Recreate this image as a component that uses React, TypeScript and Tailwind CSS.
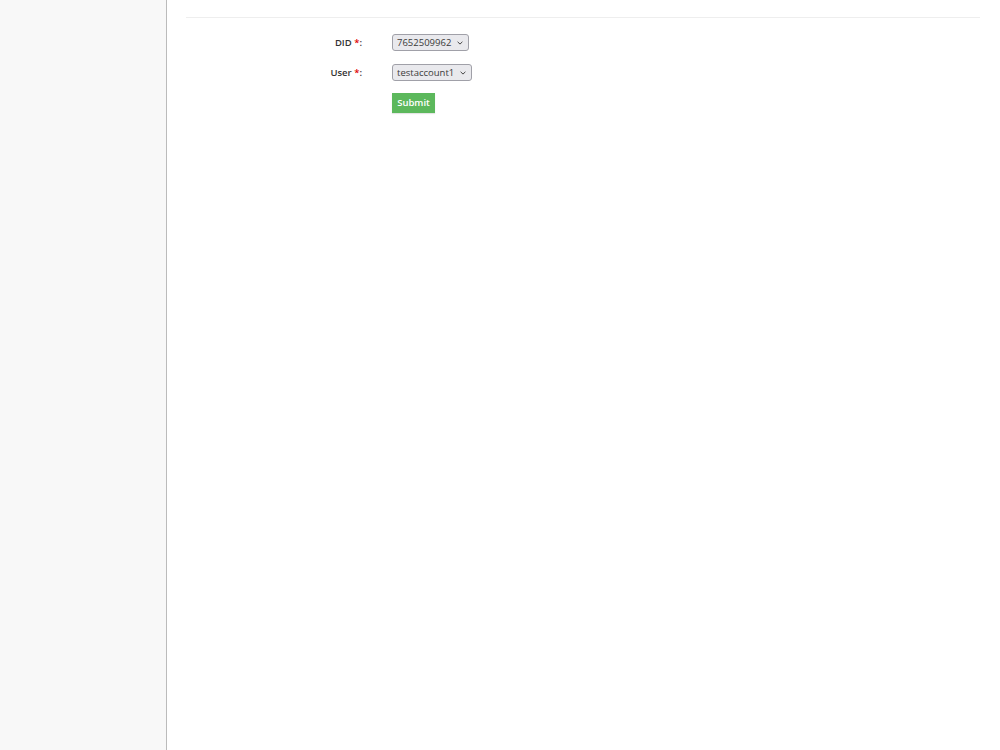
import React from "react";

function Select({ value, width }: { value: string; width: string }) {
  return (
    <div className={`relative flex h-[17px] items-center rounded-[3px] border border-[#a0a0a8] bg-[#e9e9ed] ${width}`}>
      <select className="h-full w-full appearance-none bg-transparent pl-[4px] text-[9.5px] leading-[15px] text-[#3a3a3a] outline-none">
        <option>{value}</option>
      </select>
      <svg
        className="pointer-events-none absolute right-[5px] top-[6px]"
        width="6"
        height="4"
        viewBox="0 0 6 4"
        fill="none"
      >
        <path d="M0.6 0.8 L3 3.1 L5.4 0.8" stroke="#444" strokeWidth="1" />
      </svg>
    </div>
  );
}

export default function App() {
  return (
    <div className="flex min-h-[750px] w-full bg-white" style={{ fontFamily: '"Open Sans", sans-serif' }}>
      <aside className="w-[167px] shrink-0 border-r border-[#bbbbbb] bg-[#f8f8f8]" />
      <main className="flex-1 pl-[19px] pr-[20px]">
        <div className="h-[18px] border-b border-[#eeeeee]" />
        <form className="mt-[16px] grid grid-cols-[176px_auto] items-center justify-start gap-x-[30px] gap-y-[12.5px]">
          <label className="text-right text-[9.5px] font-semibold leading-[15px] text-[#333333]">
            DID <span className="text-[#e00000]">*</span>:
          </label>
          <Select value="7652509962" width="w-[77px]" />
          <label className="text-right text-[9.5px] font-semibold leading-[15px] text-[#333333]">
            User <span className="text-[#e00000]">*</span>:
          </label>
          <Select value="testaccount1" width="w-[80px]" />
          <div />
          <div className="flex">
            <button
              type="button"
              className="h-[20px] w-[43px] bg-[#5cb85c] text-[9.5px] font-semibold text-white shadow-[0_1px_1px_rgba(0,0,0,0.1)]"
            >
              Submit
            </button>
          </div>
        </form>
      </main>
    </div>
  );
}
